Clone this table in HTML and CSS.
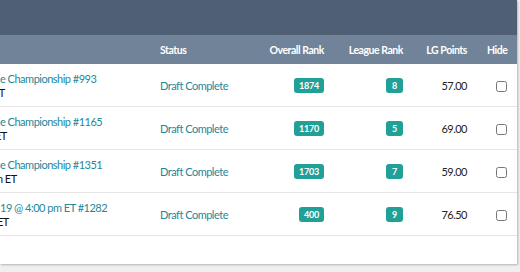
FILE: index.html
```html
<!DOCTYPE html>
<html>
<head>
<meta charset="utf-8">
<link rel="stylesheet" href="styles.css">
</head>
<body>
<div class="panel">
  <div class="topbar"></div>
  <table class="grid">
    <colgroup>
      <col class="c-name"><col class="c-status"><col class="c-overall"><col class="c-league"><col class="c-points"><col class="c-hide">
    </colgroup>
    <thead>
      <tr>
        <th class="name"></th>
        <th class="status">Status</th>
        <th class="num">Overall Rank</th>
        <th class="num">League Rank</th>
        <th class="num">LG Points</th>
        <th class="num">Hide</th>
      </tr>
    </thead>
    <tbody>
      <tr>
        <td class="name"><a class="title">e Championship #993</a><span class="when shift-et">ET</span></td>
        <td class="status"><a>Draft Complete</a></td>
        <td class="num"><span class="badge">1874</span></td>
        <td class="num"><span class="badge">8</span></td>
        <td class="num">57.00</td>
        <td class="num"><input type="checkbox"></td>
      </tr>
      <tr>
        <td class="name"><a class="title">e Championship #1165</a><span class="when shift-et2">ET</span></td>
        <td class="status"><a>Draft Complete</a></td>
        <td class="num"><span class="badge">1170</span></td>
        <td class="num"><span class="badge">5</span></td>
        <td class="num">69.00</td>
        <td class="num"><input type="checkbox"></td>
      </tr>
      <tr>
        <td class="name"><a class="title">e Championship #1351</a><span class="when shift-m">m ET</span></td>
        <td class="status"><a>Draft Complete</a></td>
        <td class="num"><span class="badge">1703</span></td>
        <td class="num"><span class="badge">7</span></td>
        <td class="num">59.00</td>
        <td class="num"><input type="checkbox"></td>
      </tr>
      <tr>
        <td class="name"><a class="title">19 @ 4:00 pm ET #1282</a><span class="when shift-e">ET</span></td>
        <td class="status"><a>Draft Complete</a></td>
        <td class="num"><span class="badge">400</span></td>
        <td class="num"><span class="badge">9</span></td>
        <td class="num">76.50</td>
        <td class="num"><input type="checkbox"></td>
      </tr>
    </tbody>
  </table>
</div>
</body>
</html>
```

FILE: styles.css
```css
html, body {
  margin: 0;
  padding: 0;
}
body {
  background: #efefef;
  font-family: Lato, "Open Sans", sans-serif;
  overflow: hidden;
  height: 272px;
}
.panel {
  width: 517px;
  height: 264px;
  background: #fff;
  box-shadow: 1px 1px 2px rgba(0, 0, 0, 0.25);
}
.topbar {
  height: 35px;
  background: #4f6075;
}
.grid {
  width: 517px;
  table-layout: fixed;
  border-collapse: collapse;
  border-spacing: 0;
}
.c-name { width: 150px; }
.c-status { width: 100px; }
.c-overall { width: 84px; }
.c-league { width: 79px; }
.c-points { width: 64px; }
.c-hide { width: 40px; }
thead th {
  height: 29px;
  padding: 0 10px;
  background: #718398;
  color: #fff;
  font-weight: 700;
  font-size: 10.5px;
  letter-spacing: -0.45px;
  text-align: left;
  vertical-align: middle;
  white-space: nowrap;
}
thead th.name { padding: 0; }
tbody td {
  height: 42px;
  padding: 0 10px;
  border-bottom: 1px solid #e6e6e6;
  font-size: 11px;
  letter-spacing: -0.5px;
  color: #222;
  vertical-align: middle;
  white-space: nowrap;
}
th.num, td.num { text-align: right; }
td.name {
  padding: 0;
  overflow: hidden;
}
.title {
  display: block;
  color: #23879a;
  line-height: 14px;
  padding-top: 2px;
}
.when {
  display: block;
  color: #111;
  line-height: 14px;
}
.shift-et { margin-left: -7px; }
.shift-et2 { margin-left: -5px; }
.shift-m { margin-left: -6px; }
.shift-e { margin-left: -3px; }
td.status a {
  color: #23879a;
}
.badge {
  display: inline-block;
  min-width: 7px;
  height: 15px;
  line-height: 15px;
  padding: 0 5px;
  border-radius: 3px;
  background: #21a098;
  color: #fff;
  font-size: 9px;
  font-weight: 700;
  letter-spacing: -0.2px;
  text-align: center;
  vertical-align: middle;
}
input[type="checkbox"] {
  margin: 0;
  width: 11px;
  height: 11px;
  vertical-align: middle;
}
```
